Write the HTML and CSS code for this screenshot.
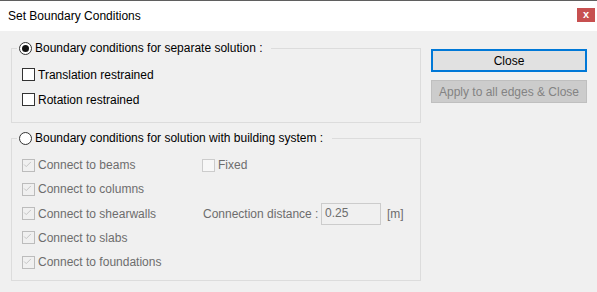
FILE: index.html
```html
<!DOCTYPE html>
<html lang="en">
<head>
  <meta charset="UTF-8">
  <title>Set Boundary Conditions</title>
  <link rel="stylesheet" href="styles.css">
</head>
<body>
  <div class="window">
    <div class="titlebar">
      <span class="title">Set Boundary Conditions</span>
      <span class="close-x">x</span>
    </div>
    <div class="content">
      <div class="groups">
        <fieldset class="group group-separate">
          <legend><span class="legend-inner"><span class="radio checked"></span>Boundary conditions for separate solution :</span></legend>
          <div class="row"><span class="check"></span>Translation restrained</div>
          <div class="row"><span class="check"></span>Rotation restrained</div>
        </fieldset>
        <fieldset class="group group-system">
          <legend><span class="legend-inner"><span class="radio"></span>Boundary conditions for solution with building system :</span></legend>
          <div class="system-grid">
            <div class="row disabled"><span class="check off checked"><svg viewBox="0 0 13 13"><path d="M2.5 6.5 L5 9 L10.5 3.5" /></svg></span>Connect to beams</div>
            <div class="row disabled"><span class="check off"></span>Fixed</div>
            <div class="row disabled"><span class="check off checked"><svg viewBox="0 0 13 13"><path d="M2.5 6.5 L5 9 L10.5 3.5" /></svg></span>Connect to columns</div>
            <div class="row"></div>
            <div class="row disabled"><span class="check off checked"><svg viewBox="0 0 13 13"><path d="M2.5 6.5 L5 9 L10.5 3.5" /></svg></span>Connect to shearwalls</div>
            <div class="row disabled distance">
              <span class="distance-label">Connection distance :</span>
              <span class="field">0.25</span>
              <span class="unit">[m]</span>
            </div>
            <div class="row disabled"><span class="check off checked"><svg viewBox="0 0 13 13"><path d="M2.5 6.5 L5 9 L10.5 3.5" /></svg></span>Connect to slabs</div>
            <div class="row"></div>
            <div class="row disabled"><span class="check off checked"><svg viewBox="0 0 13 13"><path d="M2.5 6.5 L5 9 L10.5 3.5" /></svg></span>Connect to foundations</div>
            <div class="row"></div>
          </div>
        </fieldset>
      </div>
      <div class="buttons">
        <button class="btn btn-default">Close</button>
        <button class="btn" disabled>Apply to all edges &amp; Close</button>
      </div>
    </div>
  </div>
</body>
</html>
```

FILE: styles.css
```css
* {
  box-sizing: border-box;
}
body {
  margin: 0;
  background: #f0f0f0;
  font-family: "Liberation Sans", Arial, sans-serif;
  font-size: 12px;
  color: #000;
}
.window {
  border-top: 1px solid #5f5f5f;
}
.titlebar {
  display: flex;
  justify-content: space-between;
  height: 30px;
  padding: 0 2px 0 8px;
  background: #fff;
}
.title {
  align-self: center;
  line-height: 14px;
}
.close-x {
  width: 18px;
  height: 14px;
  margin-top: 7px;
  background: #c75050;
  color: #fff;
  font-weight: bold;
  font-size: 11px;
  line-height: 13px;
  text-align: center;
}
.content {
  display: flex;
  gap: 10px;
  padding: 10px 10px 0 11px;
}
.groups {
  width: 410px;
  display: flex;
  flex-direction: column;
  gap: 8px;
}
.group {
  margin: 0;
  min-width: 0;
  border: 1px solid #dcdcdc;
  padding: 0 0 0 5px;
}
.group legend {
  padding: 0 9px 0 2px;
  height: 14px;
}
.legend-inner {
  display: flex;
  align-items: flex-start;
  gap: 3px;
  line-height: 14px;
}
.radio {
  width: 13px;
  height: 13px;
  margin-top: 1px;
  border: 1px solid #333;
  border-radius: 50%;
  background: #fff;
  display: flex;
  align-items: center;
  justify-content: center;
}
.radio.checked::after {
  content: "";
  width: 7px;
  height: 7px;
  border-radius: 50%;
  background: #111;
}
.group-separate {
  padding-top: 7px;
  padding-bottom: 10px;
}
.row {
  display: flex;
  align-items: center;
  gap: 3px;
  height: 25px;
  margin-left: 5px;
}
.check {
  width: 13px;
  height: 13px;
  border: 1px solid #333;
  background: #fff;
  flex: none;
}
.check svg {
  display: block;
  width: 11px;
  height: 11px;
  margin: -1px 0 0 -1px;
}
.check svg path {
  fill: none;
  stroke: #bcbcbc;
  stroke-width: 1;
}
.check.off {
  border-color: #cccccc;
  background: #f7f7f7;
}
.check.off.checked {
  border-color: #bcbcbc;
  background: #f0f0f0;
}
.disabled {
  color: #6d6d6d;
}
.system-grid {
  display: grid;
  grid-template-columns: 180px 1fr;
  grid-auto-rows: 24.25px;
  padding: 8px 0 6px 0;
}
.system-grid .row {
  height: auto;
}
.distance {
  gap: 0;
}
.distance-label {
  width: 119px;
  padding-left: 1px;
}
.field {
  width: 60px;
  height: 22px;
  border: 1px solid #cccccc;
  background: #f0f0f0;
  padding: 2px 0 0 3px;
  line-height: 14px;
}
.unit {
  margin-left: 6px;
}
.buttons {
  width: 156px;
  display: flex;
  flex-direction: column;
  gap: 8px;
  padding-top: 8px;
}
.btn {
  height: 23px;
  padding: 0;
  font: inherit;
  color: #000;
  background: #e1e1e1;
  border: 1px solid #adadad;
}
.btn-default {
  border: 2px solid #0078d7;
}
.btn:disabled {
  background: #cccccc;
  border-color: #bfbfbf;
  color: #838383;
}
```
